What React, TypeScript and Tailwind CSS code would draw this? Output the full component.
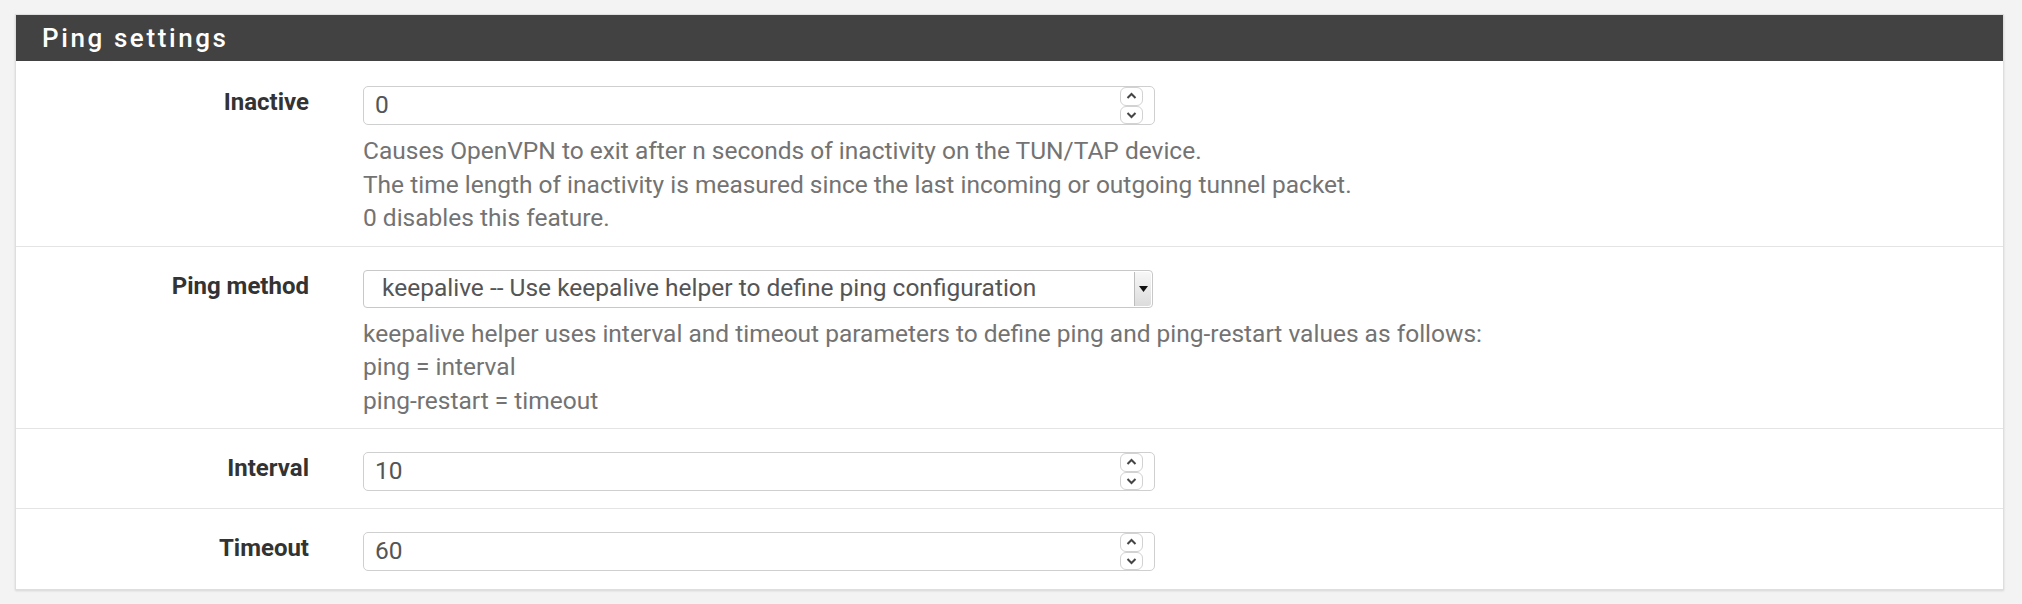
import { ReactNode } from 'react'

const font = { fontFamily: 'Roboto, "Noto Sans", sans-serif' }

function Spinner() {
  return (
    <div className="absolute right-[11px] top-[0px] flex flex-col w-[23px] h-full">
      <div className="flex-1 flex items-center justify-center rounded-[6px] border border-[#d2d2d2] bg-white">
        <svg width="11" height="8" viewBox="0 0 11 8">
          <path d="M1.5 6 L5.5 2 L9.5 6" fill="none" stroke="#454545" strokeWidth="2" />
        </svg>
      </div>
      <div className="flex-1 flex items-center justify-center rounded-[6px] border border-[#d2d2d2] bg-white">
        <svg width="11" height="8" viewBox="0 0 11 8">
          <path d="M1.5 2 L5.5 6 L9.5 2" fill="none" stroke="#454545" strokeWidth="2" />
        </svg>
      </div>
    </div>
  )
}

function NumberInput({ value }: { value: string }) {
  return (
    <div className="relative w-[792px] h-[39px] rounded-[5px] border border-[#cfcfcf] bg-white flex items-center pl-[11px] text-[24.5px] text-[#555]">
      {value}
      <Spinner />
    </div>
  )
}

function SelectBox({ value }: { value: string }) {
  return (
    <div className="w-[790px] h-[38px] rounded-[4px] border border-[#c8c8c8] bg-white flex items-center text-[24.5px] text-[#555]">
      <span className="flex-1 pl-[18px]">{value}</span>
      <div className="w-[17px] h-[34px] mr-[1px] border-l border-[#bdbdbd] bg-gradient-to-b from-[#f7f7f7] to-[#dcdcdc] rounded-r-[3px] flex items-center justify-center">
        <svg width="9" height="6" viewBox="0 0 9 6">
          <path d="M0 0 L9 0 L4.5 6 Z" fill="#111" />
        </svg>
      </div>
    </div>
  )
}

function Row({ label, children, className }: { label: string; children: ReactNode; className: string }) {
  return (
    <div className={`flex border-t border-[#e4e4e4] ${className}`}>
      <div className="w-[293px] shrink-0 text-right font-bold text-[24px] leading-[33px] text-[#333]">{label}</div>
      <div className="ml-[54px]">{children}</div>
    </div>
  )
}

function Help({ lines }: { lines: string[] }) {
  return (
    <div className="mt-[9px] text-[24.5px] leading-[33.5px] text-[#737373]">
      {lines.map((l) => (
        <div key={l}>{l}</div>
      ))}
    </div>
  )
}

export default function App() {
  return (
    <div className="min-h-screen bg-[#f3f3f3] pt-[14px] pl-[15px] pr-[18px]" style={font}>
      <div className="bg-white border border-[#dedede] shadow-[0_1px_2px_rgba(0,0,0,0.12)]">
        {/* Panel heading */}
        <div className="h-[46px] bg-[#424242] flex items-center pl-[26px]">
          <h2 className="text-white text-[26px] font-medium tracking-[0.1em]">Ping settings</h2>
        </div>

        <div className="flex pt-[25px] pb-[11px]">
          <div className="w-[293px] shrink-0 text-right font-bold text-[24px] leading-[33px] text-[#333]">Inactive</div>
          <div className="ml-[54px]">
            <NumberInput value="0" />
            <Help
              lines={[
                'Causes OpenVPN to exit after n seconds of inactivity on the TUN/TAP device.',
                'The time length of inactivity is measured since the last incoming or outgoing tunnel packet.',
                '0 disables this feature.',
              ]}
            />
          </div>
        </div>

        <Row label="Ping method" className="pt-[23px] pb-[11px]">
          <SelectBox value="keepalive -- Use keepalive helper to define ping configuration" />
          <Help
            lines={[
              'keepalive helper uses interval and timeout parameters to define ping and ping-restart values as follows:',
              'ping = interval',
              'ping-restart = timeout',
            ]}
          />
        </Row>

        <Row label="Interval" className="pt-[23px] pb-[17px]">
          <NumberInput value="10" />
        </Row>

        <Row label="Timeout" className="pt-[23px] pb-[18px]">
          <NumberInput value="60" />
        </Row>
      </div>
    </div>
  )
}
